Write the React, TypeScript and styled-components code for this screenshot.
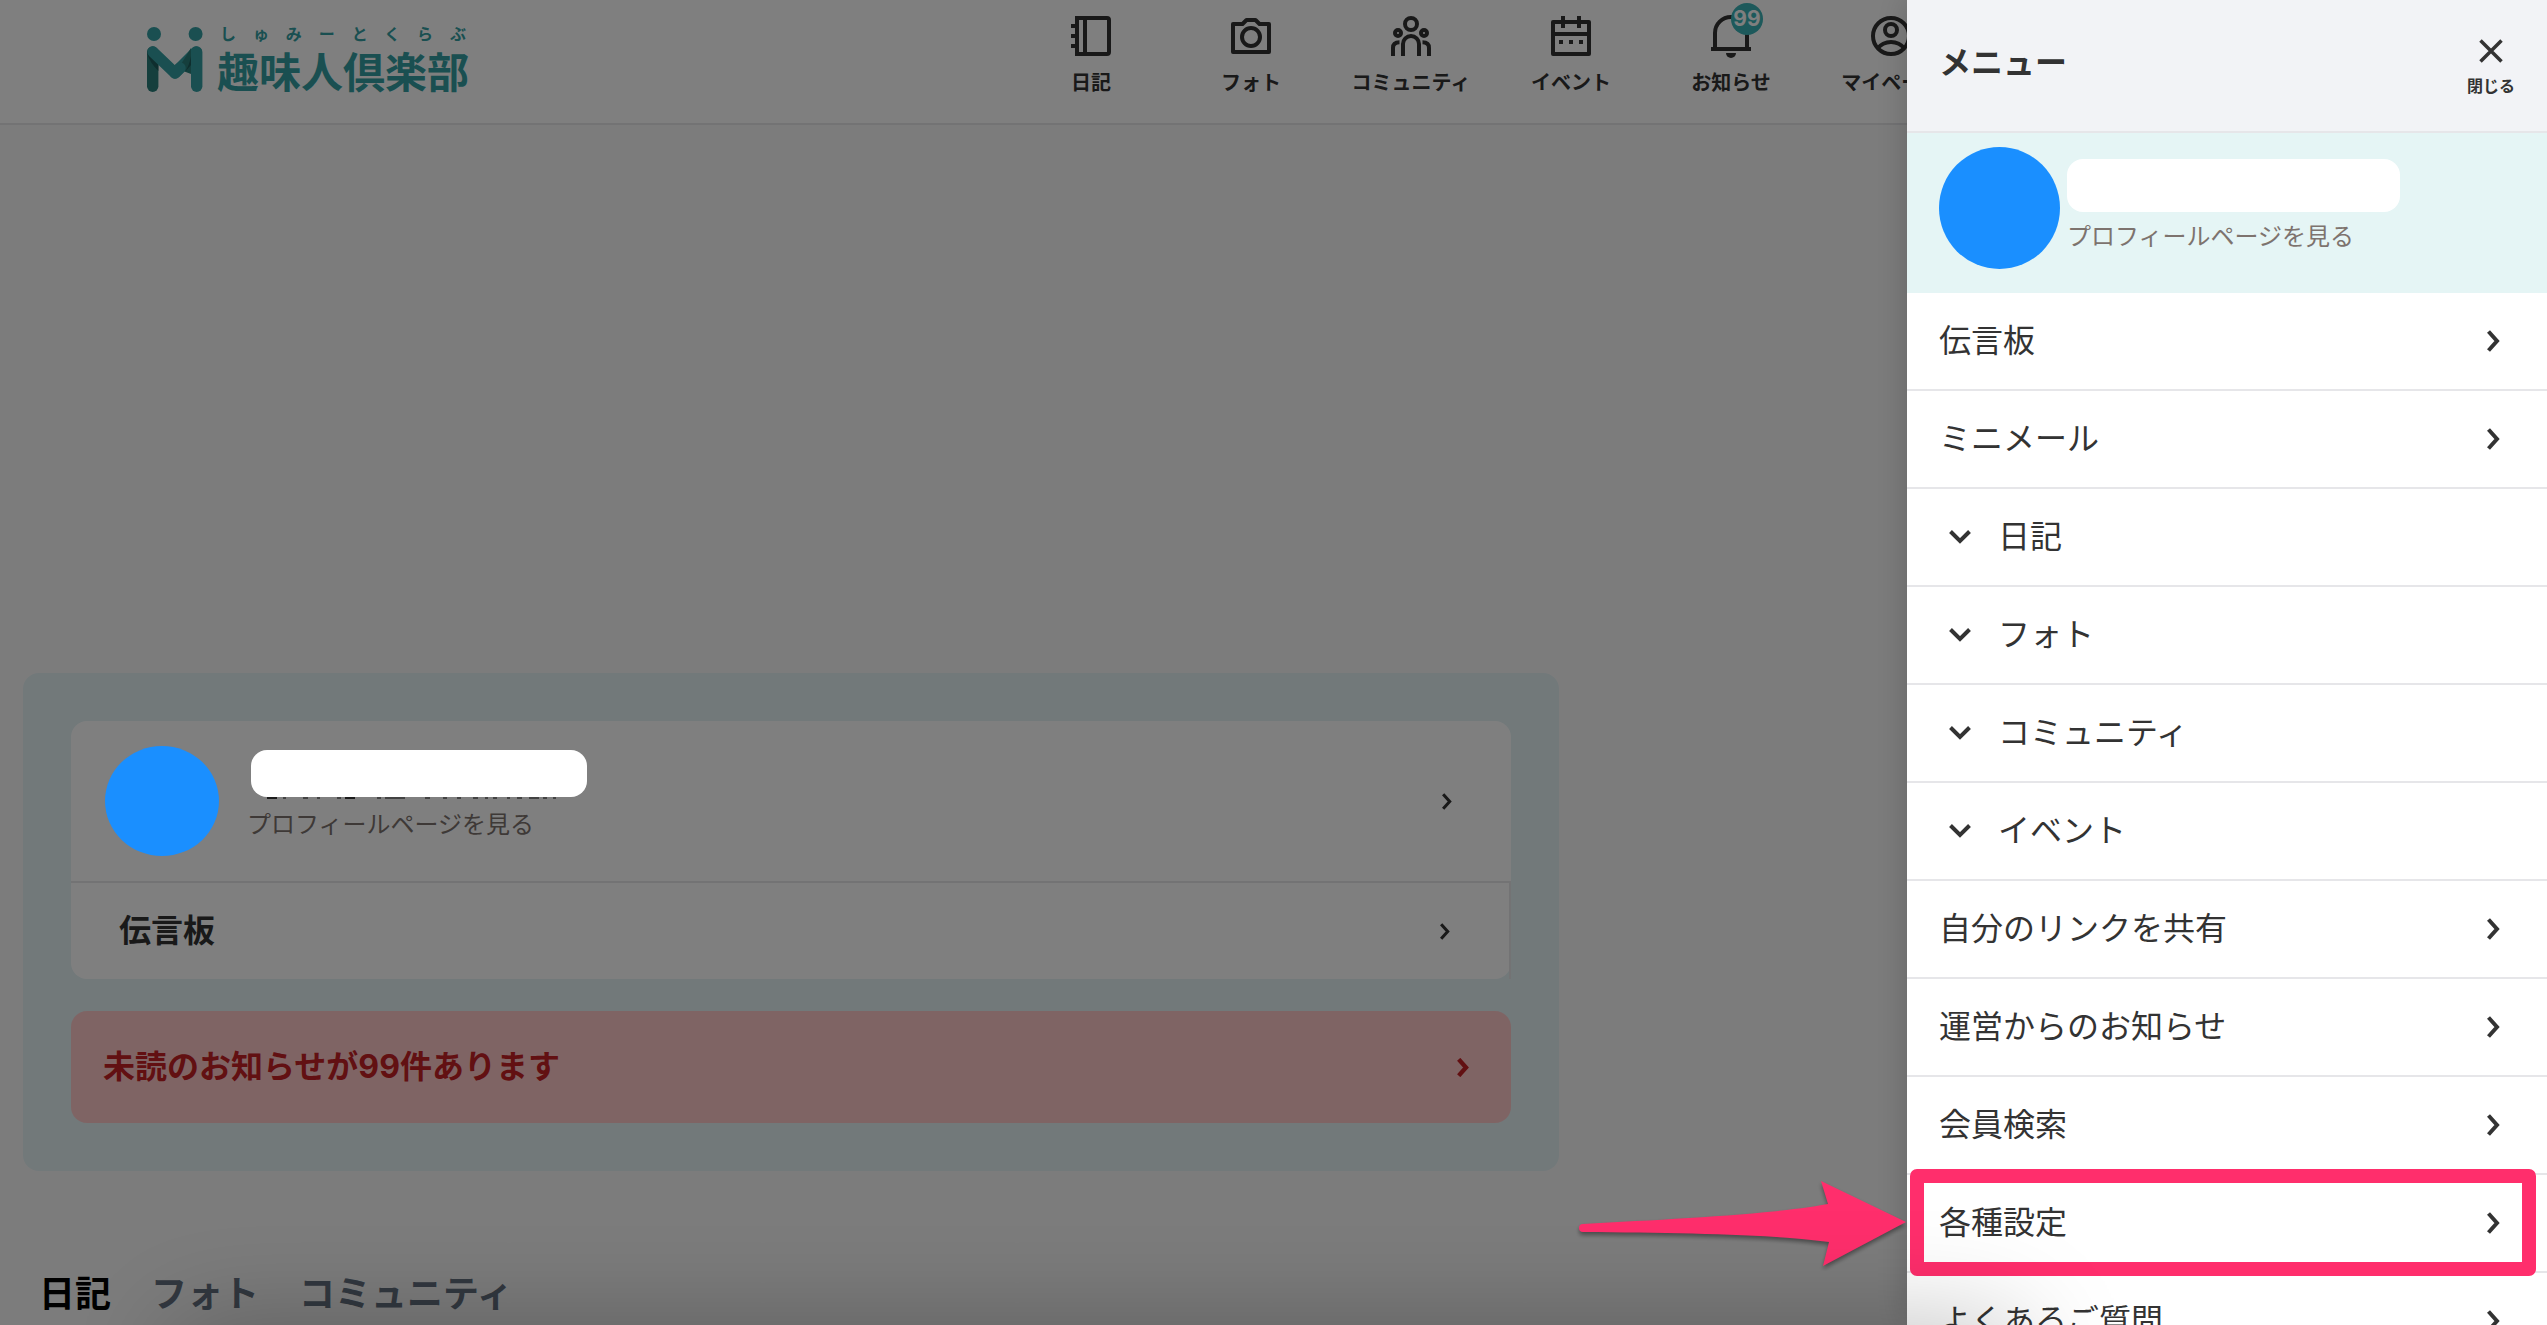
import React from "react";
import styled, { createGlobalStyle } from "styled-components";

const color = {
  ink: "#333333",
  brand: "#349fa2",
  brandDark: "#2a7f7b",
  line: "#e6e6e9",
  muted: "#7d736e",
  tint: "#e5f5f5",
  panel: "#e4f2f5",
  avatar: "#1a8fff",
  alertBg: "#ffc9c9",
  alertInk: "#c42024",
  marker: "#ff2e6c",
};

const GlobalStyle = createGlobalStyle`
  *, *::before, *::after { box-sizing: border-box; }
  body {
    margin: 0;
    min-height: 100vh;
    background: #f9f9f9;
    color: ${color.ink};
    font-family: Inter, "Noto Sans CJK JP", "Liberation Sans", sans-serif;
    overflow: hidden;
  }
  a { color: inherit; text-decoration: none; }
  button { font: inherit; color: inherit; background: none; border: 0; padding: 0; cursor: pointer; }
  ul { list-style: none; margin: 0; padding: 0; }
  h2, p { margin: 0; }
  svg { display: block; flex: none; }
`;

/* ---------- site header ---------- */

const Header = styled.header`
  display: flex;
  align-items: flex-start;
  gap: 542px;
  height: 125px;
  padding-left: 147px;
  background: #ffffff;
  border-bottom: 2px solid ${color.line};
  overflow: hidden;
`;

const Logo = styled.a`
  display: flex;
  gap: 14px;
  padding-top: 27px;
  color: ${color.brand};
`;

const LogoWords = styled.span`
  display: flex;
  flex-direction: column;
  width: 252px;
  margin-top: -4px;
`;

const LogoRuby = styled.span`
  padding: 0 3px;
  font-size: 16px;
  line-height: 22px;
  font-weight: 700;
  text-align-last: justify;
`;

const LogoName = styled.span`
  font-size: 42px;
  line-height: 56px;
  font-weight: 700;
  white-space: nowrap;
`;

const Nav = styled.nav`
  display: flex;
  flex: none;
`;

const NavItem = styled.a`
  display: flex;
  flex-direction: column;
  align-items: center;
  gap: 12px;
  width: 160px;
  padding-top: 16px;
  font-size: 20px;
  line-height: 30px;
  font-weight: 700;
  white-space: nowrap;
`;

const IconBox = styled.span`
  position: relative;
  svg { overflow: visible; }
`;

const Badge = styled.span`
  position: absolute;
  top: -13px;
  left: 20px;
  width: 32px;
  height: 32px;
  border-radius: 50%;
  background: #3bb3b6;
  color: #ffffff;
  font-size: 21px;
  line-height: 32px;
  text-align: center;
`;

/* ---------- main column ---------- */

const AdSpace = styled.div`
  height: 500px;
  margin-bottom: 48px;
`;

const HomePanel = styled.section`
  display: flex;
  flex-direction: column;
  gap: 32px;
  max-width: 1536px;
  margin-left: 23px;
  padding: 48px;
  border-radius: 16px;
  background: ${color.panel};
`;

const Card = styled.div`
  display: flex;
  flex-direction: column;
  border-radius: 16px;
  background: #ffffff;
`;

const ProfileRow = styled.a`
  display: flex;
  align-items: center;
  height: 162px;
  padding: 0 59px 0 34px;
  border-bottom: 2px solid ${color.line};
`;

const BoardRow = styled.a`
  display: flex;
  align-items: center;
  justify-content: space-between;
  height: 96px;
  padding: 0 59px 0 48px;
  border-right: 2px solid ${color.line};
  font-size: 32px;
  line-height: 48px;
  font-weight: 700;
`;

const AlertRow = styled.a`
  display: flex;
  align-items: center;
  justify-content: space-between;
  height: 112px;
  padding: 0 42px 0 32px;
  border-radius: 16px;
  background: ${color.alertBg};
  color: ${color.alertInk};
  font-size: 32px;
  line-height: 48px;
  font-weight: 700;
`;

const Avatar = styled.span<{ $w: number; $h: number }>`
  position: relative;
  z-index: 20;
  flex: none;
  width: ${(p) => p.$w}px;
  height: ${(p) => p.$h}px;
  border-radius: 50%;
  background: ${color.avatar};
`;

const ProfileText = styled.span<{ $gap: number }>`
  display: flex;
  flex: 1;
  flex-direction: column;
  align-items: flex-start;
  gap: ${(p) => p.$gap}px;
  color: ${color.muted};
  font-size: 24px;
  line-height: 36px;
`;

const NameMask = styled.span<{ $w: number; $h: number }>`
  position: relative;
  z-index: 20;
  width: ${(p) => p.$w}px;
  height: ${(p) => p.$h}px;
  border-radius: 16px;
  background: #ffffff;
`;

const HomeProfileText = styled(ProfileText)`
  align-self: flex-start;
  padding: 29px 0 0 28px;
  ${NameMask} { margin-left: 4px; }
`;

const Tabs = styled.div`
  display: flex;
  gap: 40px;
  margin-top: 96px;
  padding-left: 39px;
`;

const Tab = styled.button<{ $active?: boolean }>`
  && {
    color: ${(p) => (p.$active ? "#000000" : "#64707f")};
    font-size: 36px;
    line-height: 54px;
    font-weight: 700;
  }
`;

const Backdrop = styled.div`
  position: fixed;
  inset: 0;
  z-index: 10;
  background: rgba(0, 0, 0, 0.5);
`;

/* ---------- drawer ---------- */

const Drawer = styled.aside`
  position: fixed;
  top: 0;
  right: 0;
  bottom: 0;
  z-index: 30;
  width: 640px;
  background: #ffffff;
  box-shadow: 0 0 32px rgba(0, 0, 0, 0.2);
`;

const DrawerHead = styled.div`
  display: flex;
  align-items: flex-start;
  justify-content: space-between;
  height: 133px;
  padding: 38px 32px 0;
  border-bottom: 2px solid ${color.line};
  background: #f2f3f6;
`;

const DrawerTitle = styled.h2`
  font-size: 32px;
  line-height: 50px;
  font-weight: 700;
`;

const CloseButton = styled.button`
  && {
    display: flex;
    flex-direction: column;
    align-items: center;
    gap: 11px;
    padding-top: 1px;
    font-size: 16px;
    line-height: 24px;
    font-weight: 700;
  }
`;

const DrawerProfile = styled.a`
  display: flex;
  gap: 7px;
  height: 160px;
  padding: 14px 32px;
  background: ${color.tint};
`;

const DrawerProfileText = styled(ProfileText)`
  padding-top: 12px;
`;

const MenuItem = styled.li`
  position: relative;
  height: 98px;
  border-bottom: 2px solid ${color.line};
  background: #ffffff;
  font-size: 32px;
  line-height: 48px;
`;

const MenuLink = styled.a`
  display: flex;
  align-items: center;
  justify-content: space-between;
  height: 100%;
  padding: 0 47px 0 32px;
`;

const MenuToggle = styled.button`
  && {
    display: flex;
    align-items: center;
    gap: 27px;
    width: 100%;
    height: 100%;
    padding-left: 42px;
  }
`;

const Highlight = styled.span`
  position: absolute;
  z-index: 2;
  inset: -6px 11px -5px 3px;
  border: 14px solid ${color.marker};
  border-radius: 7px;
  pointer-events: none;
`;

const Pointer = styled.svg`
  position: absolute;
  top: 0;
  right: 100%;
  overflow: visible;
  filter: drop-shadow(0 3px 2px rgba(0, 0, 0, 0.4));
`;

const BottomShade = styled.div`
  position: fixed;
  z-index: 40;
  top: 100%;
  left: 170px;
  right: 530px;
  height: 120px;
  box-shadow: 0 0 110px rgba(0, 0, 0, 0.25);
  pointer-events: none;
`;

/* ---------- drawings ---------- */

const LogoMark = () => (
  <svg width="56" height="65" viewBox="0 0 56 65" fill="none" strokeLinecap="round">
    <path d="M5.7 25V59.3" stroke={color.brandDark} strokeWidth="11.4" />
    <path d="M0 26V24L11.4 36V44C6 39 2 33 0 26Z" fill="#1f5d5c" />
    <path d="M49 25L28 46" stroke={color.brand} strokeWidth="11.4" />
    <path d="M44 21V47L31 42Z" fill={color.brandDark} />
    <path d="M44 29V38L38 45C41 40 43 35 44 29Z" fill="#1f5d5c" />
    <path d="M6 25L28 46L33 41" stroke={color.brand} strokeWidth="11.4" strokeLinejoin="round" />
    <path d="M49.7 25V59.3" stroke={color.brand} strokeWidth="11.4" />
    <circle cx="7" cy="7" r="7" fill={color.brand} />
    <circle cx="48.6" cy="7" r="7" fill={color.brand} />
  </svg>
);

const NavIcon = ({ children }: { children: React.ReactNode }) => (
  <svg width="40" height="40" viewBox="0 0 40 40" fill="none" stroke={color.ink} strokeWidth="4">
    {children}
  </svg>
);

const DiaryIcon = (
  <NavIcon>
    <path d="M6 2H36a2 2 0 0 1 2 2V36a2 2 0 0 1-2 2H6ZM14 2V38M0 10H6M0 20H6M0 30H6" />
  </NavIcon>
);
const CameraIcon = (
  <NavIcon>
    <path d="M2 8H11.500L15.500 4H24.500L28.500 8H38V36H2Z" strokeLinejoin="round" />
    <circle cx="20" cy="21" r="9" />
  </NavIcon>
);
const PeopleIcon = (
  <NavIcon>
    <circle cx="20" cy="8" r="6" />
    <circle cx="7" cy="17" r="3" />
    <circle cx="33" cy="17" r="3" />
    <path d="M12 40V28a8 8 0 0 1 16 0V40M2 40V32c0-4 2-5.700 6.500-5.700M38 40V32c0-4-2-5.700-6.500-5.700" />
  </NavIcon>
);
const CalendarIcon = (
  <NavIcon>
    <path d="M2 6H38V38H2Z" strokeLinejoin="round" />
    <path d="M2 18H38M12 0V12M28 0V12M8 26h4M18 26h4M28 26h4" />
  </NavIcon>
);
const BellIcon = (
  <NavIcon>
    <path d="M4 33V17a16 16 0 0 1 32 0V33M0 33H40" />
    <path d="M15 37H25a5 5 0 0 1-10 0Z" fill={color.ink} stroke="none" />
  </NavIcon>
);
const PersonIcon = (
  <NavIcon>
    <circle cx="20" cy="20" r="18" />
    <circle cx="20" cy="14" r="6" />
    <path d="M6 33C10 28 15 26 20 26S30 28 34 33" />
  </NavIcon>
);

const chevronSizes = { small: [10, 17], medium: [12, 19], large: [13, 22] };

const ChevronRight = ({
  size = "large",
  weight = 4,
}: {
  size?: keyof typeof chevronSizes;
  weight?: number;
}) => (
  <svg
    width={chevronSizes[size][0]}
    height={chevronSizes[size][1]}
    viewBox="0 0 13 22"
    fill="none"
    stroke="currentColor"
    strokeWidth={weight}
  >
    <path d="M1.500 1.500L10 11L1.500 20.500" />
  </svg>
);

const ChevronDown = () => (
  <svg width="22" height="14" viewBox="0 0 22 14" fill="none" stroke="currentColor" strokeWidth="4">
    <path d="M1.500 1.500L11 11L20.500 1.500" />
  </svg>
);

const CloseIcon = () => (
  <svg width="24" height="24" viewBox="0 0 24 24" fill="none" stroke="currentColor" strokeWidth="3.500">
    <path d="M1.500 1.500L22.500 22.500M22.500 1.500L1.500 22.500" />
  </svg>
);

const NameRemnant = styled.svg`
  position: absolute;
  top: 100%;
  left: 16px;
`;

/* ---------- data ---------- */

const navItems: { label: string; icon: React.ReactNode; badge?: number }[] = [
  { label: "日記", icon: DiaryIcon },
  { label: "フォト", icon: CameraIcon },
  { label: "コミュニティ", icon: PeopleIcon },
  { label: "イベント", icon: CalendarIcon },
  { label: "お知らせ", icon: BellIcon, badge: 99 },
  { label: "マイページ", icon: PersonIcon },
];

const menuItems: { label: string; expands?: boolean; marked?: boolean }[] = [
  { label: "伝言板" },
  { label: "ミニメール" },
  { label: "日記", expands: true },
  { label: "フォト", expands: true },
  { label: "コミュニティ", expands: true },
  { label: "イベント", expands: true },
  { label: "自分のリンクを共有" },
  { label: "運営からのお知らせ" },
  { label: "会員検索" },
  { label: "各種設定", marked: true },
  { label: "よくあるご質問" },
];

const tabs = ["日記", "フォト", "コミュニティ"];

export default function App() {
  return (
    <>
      <GlobalStyle />
      <Header>
        <Logo href="#">
          <LogoMark />
          <LogoWords>
            <LogoRuby>しゅみーとくらぶ</LogoRuby>
            <LogoName>趣味人倶楽部</LogoName>
          </LogoWords>
        </Logo>
        <Nav>
          {navItems.map((item) => (
            <NavItem href="#" key={item.label}>
              <IconBox>
                {item.icon}
                {item.badge && <Badge>{item.badge}</Badge>}
              </IconBox>
              {item.label}
            </NavItem>
          ))}
        </Nav>
      </Header>

      <main>
        <AdSpace />
        <HomePanel>
          <Card>
            <ProfileRow href="#">
              <Avatar $w={114} $h={110} />
              <HomeProfileText $gap={10}>
                <NameMask $w={336} $h={47}>
                  <NameRemnant width="292" height="2" viewBox="0 0 292 2" stroke="#1c1c1c" strokeWidth="2">
                    <path d="M0 1H10M78 1H88" />
                    <path
                      d="M16 1h3M36 1h5M50 1h3M70 1h4M110 1h4M118 1h20M158 1h5M176 1h4M190 1h4M206 1h5M218 1h3M226 1h4M240 1h3M250 1h5M262 1h10M276 1h4M286 1h3"
                      opacity="0.600"
                    />
                  </NameRemnant>
                </NameMask>
                プロフィールページを見る
              </HomeProfileText>
              <ChevronRight size="small" />
            </ProfileRow>
            <BoardRow href="#">
              伝言板
              <ChevronRight size="small" />
            </BoardRow>
          </Card>
          <AlertRow href="#">
            未読のお知らせが99件あります
            <ChevronRight size="medium" weight={5} />
          </AlertRow>
        </HomePanel>
        <Tabs role="tablist">
          {tabs.map((label, i) => (
            <Tab key={label} role="tab" aria-selected={i === 0} $active={i === 0}>
              {label}
            </Tab>
          ))}
        </Tabs>
      </main>

      <Backdrop />

      <Drawer>
        <DrawerHead>
          <DrawerTitle>メニュー</DrawerTitle>
          <CloseButton>
            <CloseIcon />
            閉じる
          </CloseButton>
        </DrawerHead>
        <DrawerProfile href="#">
          <Avatar $w={121} $h={122} />
          <DrawerProfileText $gap={7}>
            <NameMask $w={333} $h={53} />
            プロフィールページを見る
          </DrawerProfileText>
        </DrawerProfile>
        <ul>
          {menuItems.map((item) => (
            <MenuItem key={item.label}>
              {item.expands ? (
                <MenuToggle aria-expanded={false}>
                  <ChevronDown />
                  {item.label}
                </MenuToggle>
              ) : (
                <MenuLink href="#">
                  {item.label}
                  <ChevronRight />
                </MenuLink>
              )}
              {item.marked && (
                <>
                  <Highlight />
                  <Pointer width="328" height="98" viewBox="0 0 328 98" fill={color.marker}>
                    <path d="M4 49C90 44 190 40 249 29L242 6L327 47L244 91L250 67C190 59 100 58 4 57A4 4 0 0 1 4 49Z" />
                  </Pointer>
                </>
              )}
            </MenuItem>
          ))}
        </ul>
      </Drawer>
      <BottomShade />
    </>
  );
}
